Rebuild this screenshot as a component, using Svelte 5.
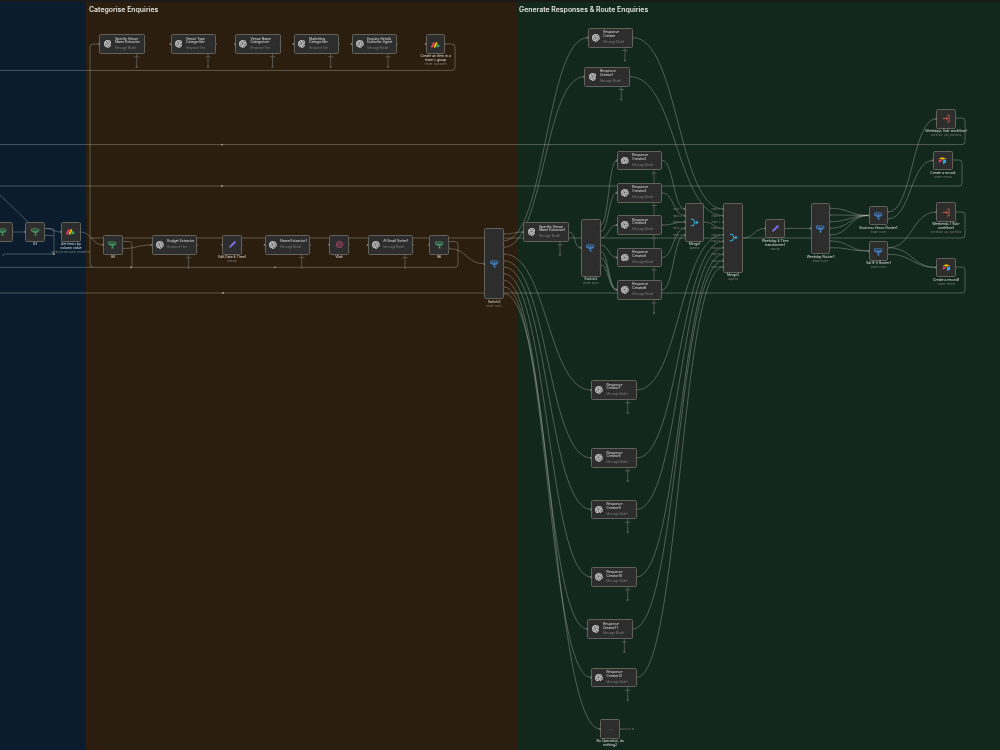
<script>
  const msg = 'Message Model';
  const txt = 'Response Text';
  const rules = 'mode: Rules';

  // free canvas: nodes sit at their workflow coordinates
  const wide = (x, y, title, sub, stem, kind = 'openai') => ({ x, y, w: 45.5, h: 19.5, title, sub, stem, kind, wide: true });
  const box = (x, y, kind, label, sub, h = 19.5) => ({ x, y, w: 19.6, h, kind, label, sub });

  const nodes = [
    wide(99.3, 34.3, ['Specify Venue', 'Name Extractor'], msg, 136.7),
    wide(170.5, 34.3, ['Venue Type', 'Categoriser'], txt, 208),
    wide(235, 34.3, ['Venue Name', 'Categoriser'], txt, 272.5),
    wide(293.5, 34.3, ['Marketing', 'Categoriser'], txt, 330.7),
    wide(351.7, 34.3, ['Enquiry Details', 'Extractor Agent'], msg, 388),
    box(425.8, 34.3, 'monday', ["Create an item in a", "team's group"], 'create: boardItem'),

    box(-7, 222, 'if'),
    box(25.3, 222, 'if', ['If3']),
    box(61, 222, 'monday', ['Get items by', 'column value'], 'getByColumnValue: boardItem'),
    box(103, 235, 'if', ['If4']),
    wide(151.7, 235.2, ['Budget Extractor'], txt, 188.5),
    box(222.3, 235, 'edit', ['Edit Date & Time1'], 'manual'),
    wide(264.7, 235.2, ['Name Extractor1'], msg, 301.7),
    box(329.3, 235, 'wait', ['Wait']),
    wide(367.7, 235.2, ['AI Email Sorter1'], msg, 405),
    box(429.3, 235, 'if', ['If6']),
    box(484.3, 228.3, 'switch', ['Switch2'], rules, 71),

    wide(587.7, 28, ['Response', 'Creator'], msg, 625),
    wide(584.3, 67, ['Response', 'Creator1'], msg, 621.3),
    wide(523.3, 222.3, ['Specific Venue', 'Name Extractor1'], msg, 560),
    box(581, 218.7, 'switch', ['Switch3'], rules, 58),
    wide(616.7, 150.7, ['Response', 'Creator2'], msg),
    wide(616.7, 183, ['Response', 'Creator3'], msg),
    wide(616.7, 215.3, ['Response', 'Creator4'], msg),
    wide(616.7, 247.7, ['Response', 'Creator5'], msg),
    wide(616.7, 280, ['Response', 'Creator6'], msg),
    wide(591, 380.3, ['Response', 'Creator7'], msg, 627.7),
    wide(591, 448.3, ['Response', 'Creator8'], msg, 627.7),
    wide(591, 499.7, ['Response', 'Creator9'], msg, 627.7),
    wide(591, 567.4, ['Response', 'Creator10'], msg, 627.7),
    wide(587.3, 619.4, ['Response', 'Creator11'], msg, 624.3),
    wide(591, 667.7, ['Response', 'Creator12'], msg, 627.7),
    box(600.3, 719.3, 'noop', ['No Operation, do', 'nothing2']),

    box(684.7, 202.7, 'merge', ['Merge1'], 'append', 39),
    box(723.3, 202.7, 'merge', ['Merge2'], 'append', 70.4),
    box(765.3, 218.7, 'edit', ['Weekday & Time', 'transformer1'], 'manual'),
    box(810.7, 202.7, 'switch', ['Weekday Router1'], rules, 51.5),
    box(868.7, 205.7, 'switch', ['Business Hours Router1'], rules),
    box(868.7, 241.3, 'switch', ['Sat 9-5 Router1'], rules),
    box(936.3, 109, 'exec', ['Weekdays Sub-workflow1'], 'workflow: call_workflow'),
    box(933, 150.7, 'airtable', ['Create a record'], 'create: record'),
    box(936.3, 202.4, 'exec', ['Weekends 1 Sub-', 'workflow1'], 'workflow: call_workflow'),
    box(936.3, 257.7, 'airtable', ['Create a record1'], 'create: record')
  ];

  const c = (x1, y1, x2, y2) => {
    const dx = Math.max(Math.abs(x2 - x1) * 0.5, 8);
    return `M${x1} ${y1}C${x1 + dx} ${y1} ${x2 - dx} ${y2} ${x2} ${y2}`;
  };

  const sw2 = [234, 240.7, 247.3, 254, 260.7, 267, 273.7, 280.3, 287, 293.7];
  const sw2Targets = [[523.3, 232], [587.7, 37.7], [584.3, 76.7], [591, 390], [591, 458], [591, 509.4], [591, 577], [587.3, 629], [591, 677.4], [600.3, 729]];
  const sw3 = [225, 231.6, 238, 245, 251.6, 258, 265];
  const sw3Targets = [[616.7, 160.4], [616.7, 192.8], [616.7, 225], [616.7, 257.4], [616.7, 289.8], [616.7, 289.8], [616.7, 289.8]];
  const mergeIn1 = [209, 215.7, 222, 228.3, 235];
  const mergeIn2 = [209, 215.7, 222, 228.3, 234.8, 241.3, 247.7, 254.2, 260.6, 267];
  const toMerge2 = [[633.2, 37.7, 0], [629.8, 76.7, 1], [703.5, 222, 3], [636.5, 390, 4], [636.5, 458, 5], [636.5, 509.4, 6], [636.5, 577, 7], [632.8, 629, 8], [636.5, 677.4, 9]];
  const rc = [160.4, 192.8, 225, 257.4, 289.8];
  const router = [208.3, 215, 221.7, 228.3, 235, 241, 247.7];

  const curves = [
    'M0 195L28 222',
    c(12.6, 232, 25.3, 232),
    c(44.9, 228.5, 61, 232),
    c(80.6, 232, 103, 245),
    c(122.6, 248.5, 151.7, 245),
    c(449, 248.5, 484.3, 263.8),
    ...sw2.map((y, i) => c(503.9, y, sw2Targets[i][0], sw2Targets[i][1])),
    c(568.8, 232, 581, 248),
    ...sw3.map((y, i) => c(600.6, y, sw3Targets[i][0], sw3Targets[i][1])),
    ...rc.map((y, i) => c(662.2, y, 684.7, mergeIn1[i])),
    ...toMerge2.map(([x, y, i]) => c(x, y, 723.3, mergeIn2[i])),
    c(742.9, 238, 765.3, 228.4),
    c(784.9, 228.4, 810.7, 228.4),
    ...router.slice(0, 5).map((y) => c(830.3, y, 868.7, 215.4)),
    ...router.slice(5).map((y) => c(830.3, y, 868.7, 251)),
    c(888.3, 212, 936.3, 118.7),
    c(888.3, 218.7, 933, 160.4),
    c(888.3, 247.7, 936.3, 212),
    c(888.3, 247.7, 936.3, 267.4),
    c(888.3, 254.3, 936.3, 267.4)
  ];

  // straight runs, with rounded corners where they loop back
  const runs = [
    'M0 70.4H452a3 3 0 0 0 3-3V47a3 3 0 0 0-3-3H445',
    'M99.3 44H93a3 3 0 0 0-3 3V264a3 3 0 0 0 3 3',
    'M90 238H962a3 3 0 0 0 3-3V215a3 3 0 0 0-3-3H956',
    'M0 144.6H962a3 3 0 0 0 3-3V121a3 3 0 0 0-3-3H956',
    'M0 186H959a3 3 0 0 0 3-3V163a3 3 0 0 0-3-3H953',
    'M0 293H962a3 3 0 0 0 3-3V270a3 3 0 0 0-3-3H956',
    'M0 267.3H455a3 3 0 0 0 3-3V244.5a3 3 0 0 0-3-3H449',
    'M122.6 241.5H129a3 3 0 0 1 3 3V267',
    'M44.9 235.5H52a2 2 0 0 1 2 2V252a2 2 0 0 1-2 2H5a2 2 0 0 0-2 2',
    'M44.9 228.5H52a2 2 0 0 1 2 2V236'
  ];

  const dots = [[222, 144.6], [222, 186], [223, 293], [131, 267.3], [275, 267.3], [54, 254]];

  const stems = nodes.filter((n) => n.stem).map((n) => ({ x: n.stem, y1: n.y + n.h, y2: n.y + n.h + 13 }));

  const outPorts = [
    ...nodes.filter((n) => n.kind !== 'switch' && n.kind !== 'merge' && n.kind !== 'if').map((n) => [n.x + n.w, n.y + n.h / 2]),
    ...nodes.filter((n) => n.kind === 'if').flatMap((n) => [[n.x + n.w, n.y + 6.4], [n.x + n.w, n.y + 13]]),
    ...sw2.map((y) => [503.9, y]),
    ...sw3.map((y) => [600.6, y]),
    ...router.map((y) => [830.3, y]),
    [888.3, 212], [888.3, 218.7], [888.3, 247.7], [888.3, 254.3],
    [703.5, 222], [742.9, 238]
  ];
  const inPorts = [
    ...nodes.filter((n) => n.kind !== 'merge').map((n) => [n.x, n.y + n.h / 2]),
    ...mergeIn1.map((y) => [684.7, y]),
    ...mergeIn2.map((y) => [723.3, y])
  ];
  const inputLabels = [
    ...mergeIn1.map((y, i) => ({ x: 673, y, t: `Input ${i + 1}` })),
    ...mergeIn2.map((y, i) => ({ x: 711.5, y, t: `Input ${i + 1}` }))
  ];
  const openai = 'M22.28 9.82a5.98 5.98 0 0 0-.52-4.91 6.05 6.05 0 0 0-6.51-2.9A6.07 6.07 0 0 0 4.98 4.18a5.98 5.98 0 0 0-4 2.9 6.05 6.05 0 0 0 .74 7.1 5.98 5.98 0 0 0 .51 4.91 6.05 6.05 0 0 0 6.52 2.9A5.98 5.98 0 0 0 13.26 24a6.06 6.06 0 0 0 5.77-4.21 5.99 5.99 0 0 0 4-2.9 6.06 6.06 0 0 0-.75-7.07zm-9.02 12.61a4.48 4.48 0 0 1-2.88-1.04l.14-.08 4.78-2.76a.79.79 0 0 0 .39-.68v-6.74l2.02 1.17a.07.07 0 0 1 .04.05v5.58a4.5 4.5 0 0 1-4.49 4.5zm-9.66-4.13a4.47 4.47 0 0 1-.53-3.01l.14.09 4.78 2.76a.77.77 0 0 0 .78 0l5.84-3.37v2.33a.08.08 0 0 1-.03.06l-4.84 2.79a4.5 4.5 0 0 1-6.14-1.65zM2.34 7.9a4.49 4.49 0 0 1 2.37-1.97v5.67a.77.77 0 0 0 .39.68l5.81 3.35-2.02 1.17a.08.08 0 0 1-.07 0l-4.83-2.79A4.5 4.5 0 0 1 2.34 7.87zm16.6 3.86-5.84-3.39 2.02-1.16a.08.08 0 0 1 .07 0l4.83 2.79a4.49 4.49 0 0 1-.68 8.1v-5.68a.79.79 0 0 0-.4-.66zm2.01-3.02-.14-.09-4.77-2.78a.78.78 0 0 0-.79 0L9.41 9.23V6.9a.07.07 0 0 1 .03-.06l4.83-2.79a4.5 4.5 0 0 1 6.68 4.66zM8.31 12.86l-2.02-1.16a.08.08 0 0 1-.04-.06V6.07a4.5 4.5 0 0 1 7.38-3.45l-.14.08L8.7 5.46a.79.79 0 0 0-.39.68zm1.1-2.37L12 9l2.61 1.5v3L12.01 15l-2.61-1.5z';
</script>

{#snippet icon(kind)}
  <svg class="icon" viewBox="0 0 24 24" aria-hidden="true">
    {#if kind === 'openai'}
      <path d={openai} fill="#ececec" stroke="#ececec" stroke-width="0.7" />
    {:else if kind === 'if' || kind === 'switch'}
      {@const col = kind === 'if' ? '#4aa86c' : '#4a8fe0'}
      <g fill="none" stroke={col} stroke-width="2" stroke-linejoin="round" stroke-linecap="round">
        <path d="M2 5h17l3.5 3L19 11H2z" />
        <path d="M5 11h15l-2.5 3.5H7.5z" />
        <path d="M12 14.5V21M9.5 21h5" />
      </g>
    {:else if kind === 'monday'}
      <path d="M2.5 18 7.5 8" stroke="#e8405a" stroke-width="4.6" stroke-linecap="round" />
      <path d="M9.5 18 14.5 8" stroke="#f5c400" stroke-width="4.6" stroke-linecap="round" />
      <path d="M16 18 18.5 13" stroke="#35b56a" stroke-width="4.2" stroke-linecap="round" />
      <circle cx="21" cy="16.5" r="2.2" fill="#35b56a" />
    {:else if kind === 'edit'}
      <path d="M3 21l1.4-5.4L16.5 3.5a2.2 2.2 0 0 1 3.1 0l.9.9a2.2 2.2 0 0 1 0 3.1L8.4 19.6z" fill="#7a6bd6" />
    {:else if kind === 'wait'}
      <circle cx="12" cy="12" r="8" fill="none" stroke="#d9557f" stroke-width="2" />
      <circle cx="12" cy="12" r="3.2" fill="none" stroke="#d9557f" stroke-width="1.6" />
    {:else if kind === 'merge'}
      <g fill="none" stroke="#35a6c9" stroke-width="2.8" stroke-linecap="round" stroke-linejoin="round">
        <path d="M3 3.5h5.5l4.5 8.5-4.5 8.5H3" />
        <path d="M13 12h8" />
        <path d="M17.5 8.5 21 12l-3.5 3.5" />
      </g>
    {:else if kind === 'exec'}
      <g fill="none" stroke="#d9604c" stroke-width="2.2" stroke-linecap="round" stroke-linejoin="round">
        <path d="M15 3h4v18h-4" />
        <path d="M3 12h12M11.5 8.5 15 12l-3.5 3.5" />
      </g>
    {:else if kind === 'airtable'}
      <path d="M11 3 2.5 6.4 12 10l9.5-3.6z" fill="#f5b800" />
      <path d="M13 12v9.5l8.5-3.4V8.6z" fill="#2fa8ef" />
      <path d="M2 8.5v9.6l8.5-4.6V11.8z" fill="#e8405a" />
    {:else if kind === 'noop'}
      <path d="M7 12h10M14 9l3 3-3 3" fill="none" stroke="#4e4e4e" stroke-width="1.4" />
    {/if}
  </svg>
{/snippet}

<div class="canvas">
  <div class="topbar"></div>
  <div class="sections">
    <section class="blue"></section>
    <section class="brown"><h2>Categorise Enquiries</h2></section>
    <section class="green"><h2>Generate Responses &amp; Route Enquiries</h2></section>
  </div>

  <svg class="wires" viewBox="0 0 1000 750">
    {#each curves as d}<path class="wire" {d} />{/each}
    {#each runs as d}<path class="wire" {d} />{/each}
    {#each stems as s}
      <path class="stem" d="M{s.x} {s.y1}V{s.y2}M{s.x - 2.6} {s.y1 + 3}h5.2" />
      <circle class="stem-end" cx={s.x} cy={s.y2} r="1.1" />
    {/each}
    <path class="stem" d="M654 299.7V313M651.4 303h5.2M651.4 173h5.2M651.4 205.5h5.2M651.4 238h5.2M651.4 270h5.2M654 170v110" />
    <circle class="stem-end" cx="654" cy="313" r="1.1" />
    <path class="stem" d="M620 729h11" />
    <circle class="stem-end" cx="633" cy="729" r="1.1" />
    {#each dots as [cx, cy]}<circle class="dot" {cx} {cy} r="0.9" />{/each}
  </svg>

  {#each nodes as n}
    <div class="node" class:wide={n.wide} style="left:{n.x}px;top:{n.y}px;width:{n.w}px;height:{n.h}px">
      {@render icon(n.kind)}
      {#if n.wide}
        <div class="info">
          <p class="title">{#each n.title as line}<span>{line}</span>{/each}</p>
          <p class="sub">{n.sub}</p>
        </div>
      {/if}
      {#if n.label}
        <div class="caption">
          {#each n.label as line}<span>{line}</span>{/each}
          {#if n.sub}<small>{n.sub}</small>{/if}
        </div>
      {/if}
    </div>
  {/each}

  <svg class="wires" viewBox="0 0 1000 750">
    {#each outPorts as [cx, cy]}<circle class="port" {cx} {cy} r="1" />{/each}
    {#each inPorts as [x, y]}<rect class="port-in" x={x - 0.9} y={y - 1.1} width="1.5" height="2.2" />{/each}
    {#each inputLabels as l}<text class="input-label" x={l.x} y={l.y + 1}>{l.t}</text>{/each}
  </svg>
</div>

<style>
  :global(body) {
    margin: 0;
    background: #13281d;
  }

  .canvas {
    position: relative;
    width: 1000px;
    height: 750px;
    overflow: hidden;
    font-family: Inter, "Liberation Sans", sans-serif;
    filter: blur(0.3px);
  }

  .topbar {
    height: 2px;
    background: #1a1a1a;
  }

  .sections {
    display: flex;
    height: 748px;
  }

  section {
    box-sizing: border-box;
    padding: 2.5px 2px;
  }

  section h2 {
    margin: 0;
    font-size: 6.9px;
    line-height: 9px;
    font-weight: 600;
    color: #e4e4df;
    white-space: nowrap;
  }

  .blue {
    width: 86px;
    background: #0a1c2e;
  }

  .brown {
    width: 431px;
    background: #2c1e0e;
    padding-left: 3px;
  }

  .green {
    flex: 1;
    background: #13281d;
  }

  .wires {
    position: absolute;
    inset: 0;
    width: 1000px;
    height: 750px;
    pointer-events: none;
  }

  .wire {
    fill: none;
    stroke: rgba(205, 208, 200, 0.5);
    stroke-width: 0.65;
  }

  .stem {
    fill: none;
    stroke: #5a5a56;
    stroke-width: 0.9;
  }

  .stem-end {
    fill: #5a5a56;
  }

  .dot {
    fill: #a4a49c;
  }

  .node {
    position: absolute;
    box-sizing: border-box;
    display: flex;
    align-items: center;
    justify-content: center;
    background: #2d2d2d;
    border: 1px solid #62625b;
    border-radius: 1.6px;
    color: #e0e0e0;
  }

  .node.wide {
    justify-content: flex-start;
    gap: 3.6px;
    padding-left: 3.4px;
  }

  .icon {
    width: 9px;
    height: 9px;
    flex: none;
  }

  .wide .icon {
    width: 7.6px;
    height: 7.6px;
  }

  .info {
    min-width: 0;
  }

  .title,
  .sub {
    margin: 0;
    white-space: nowrap;
  }

  .title {
    font-size: 3.4px;
    line-height: 3.9px;
    font-weight: 400;
  }

  .title span {
    display: block;
  }

  .sub {
    margin-top: 2px;
    font-size: 2.8px;
    line-height: 3.2px;
    color: #7c7c78;
  }

  .caption {
    position: absolute;
    top: calc(100% + 1.4px);
    left: 50%;
    transform: translateX(-50%);
    display: flex;
    flex-direction: column;
    align-items: center;
    white-space: nowrap;
    font-size: 3.4px;
    line-height: 4.2px;
    font-weight: 400;
  }

  .caption small {
    margin-top: 0.8px;
    font-size: 2.7px;
    line-height: 3.4px;
    font-weight: 400;
    color: #7c7c78;
  }

  .port {
    fill: #55554f;
  }

  .port-in {
    fill: #77776f;
  }

  .input-label {
    font-size: 2.7px;
    fill: #7c7c78;
    font-family: Inter, "Liberation Sans", sans-serif;
  }
</style>
